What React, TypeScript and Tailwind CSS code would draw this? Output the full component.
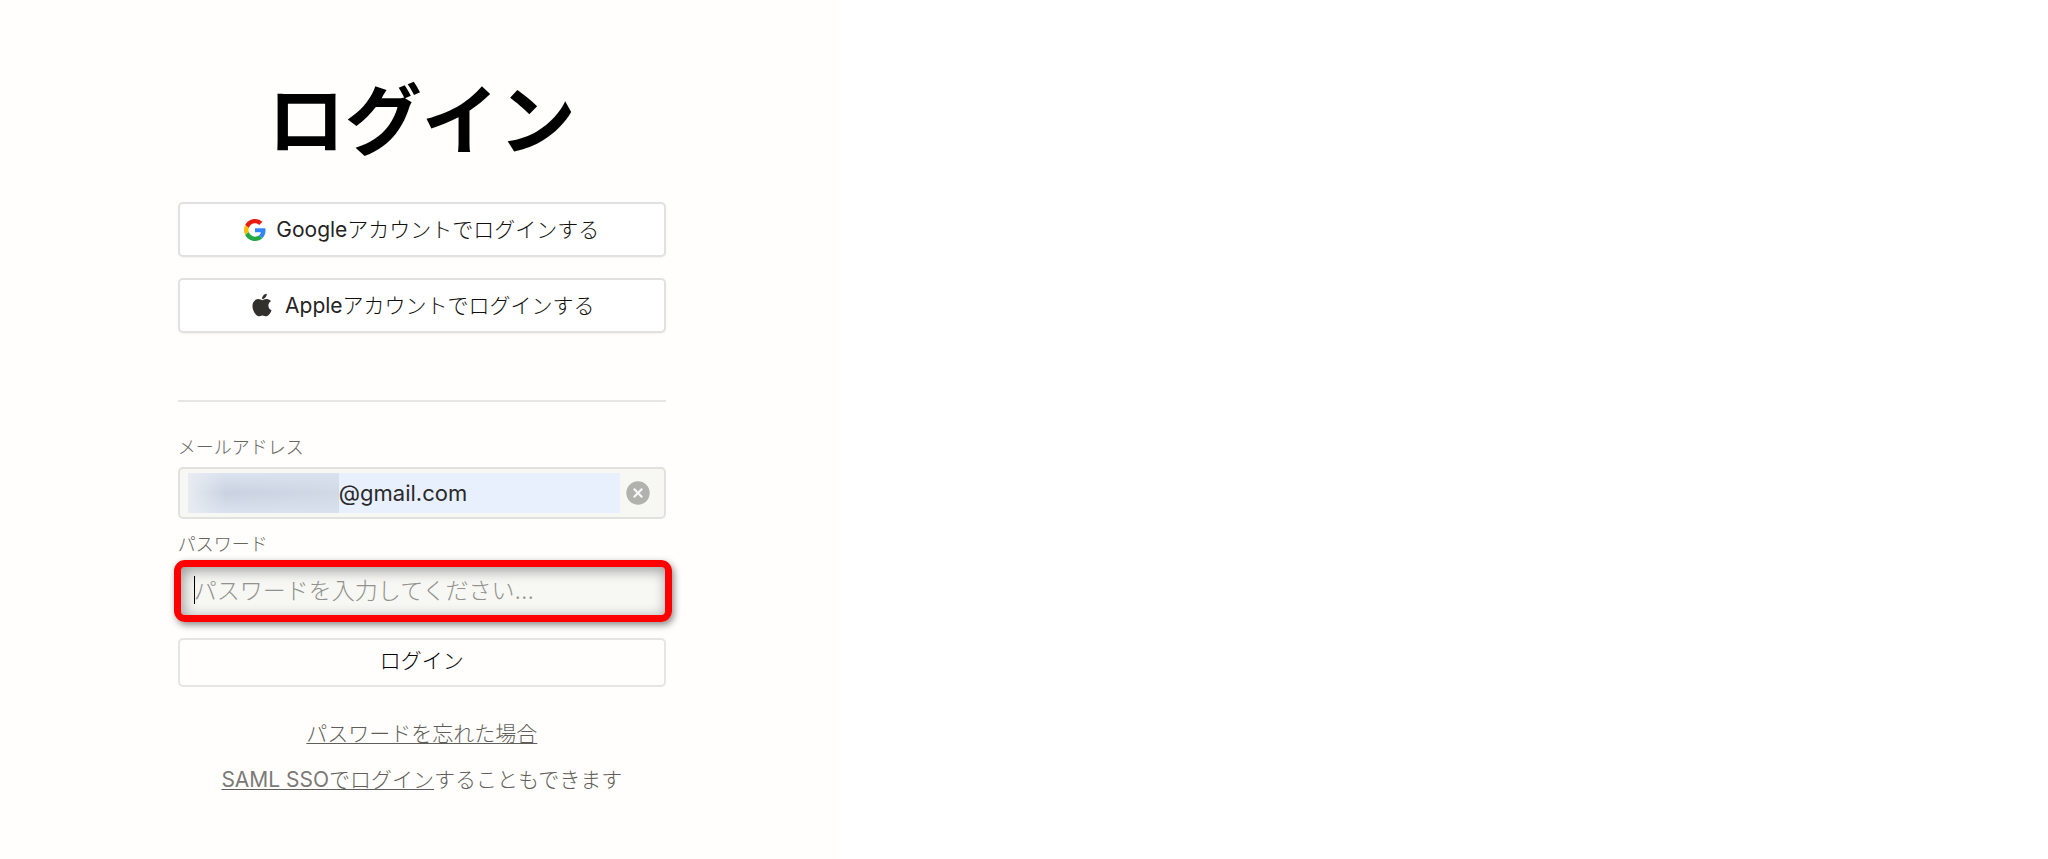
import { FaApple } from "react-icons/fa";
import type { ReactNode } from "react";

type ProviderButtonProps = {
  icon: ReactNode;
  provider: string;
};

function ProviderButton({ icon, provider }: ProviderButtonProps) {
  return (
    <button
      type="button"
      className="flex h-[55px] w-full items-center justify-center gap-[10px] rounded-[5px] border-2 border-[#e1e1e1] bg-white text-[21px] leading-8 font-light text-[#11100c] shadow-[0_1px_2px_rgba(0,0,0,0.05)]"
    >
      {icon}
      <span>
        <span className="font-normal text-[#25241f]">{provider}</span>アカウントでログインする
      </span>
    </button>
  );
}

function GoogleIcon() {
  return (
    <svg viewBox="0 0 48 48" className="size-[22px] shrink-0" aria-hidden="true">
      <path fill="#ea1b0d" d="M24 9.5c3.5 0 6.7 1.2 9.2 3.6l6.9-6.9C35.9 2.4 30.5 0 24 0 14.6 0 6.5 5.4 2.6 13.2l8 6.2C12.4 13.7 17.7 9.5 24 9.5z" />
      <path fill="#3186ff" d="M47 24.6c0-1.6-.2-3.1-.4-4.6H24v9h12.9c-.6 3-2.3 5.5-4.8 7.2l7.7 6C44.4 38 47 31.9 47 24.6z" />
      <path fill="#fbbc05" d="M10.5 28.6a14.5 14.5 0 0 1 0-9.2l-7.9-6.2a24 24 0 0 0 0 21.6z" />
      <path fill="#22a845" d="M24 48c6.5 0 11.9-2.1 15.9-5.8l-7.7-6c-2.2 1.5-4.9 2.3-8.2 2.3-6.3 0-11.6-4.2-13.5-9.9l-7.9 6.2C6.5 42.6 14.6 48 24 48z" />
    </svg>
  );
}

function ClearIcon() {
  return (
    <svg viewBox="0 0 24 24" className="size-6" aria-hidden="true">
      <circle cx="12" cy="12" r="11.7" fill="#b1b1ae" />
      <path d="M7.8 7.8l8.4 8.4M16.2 7.8l-8.4 8.4" stroke="#f7f7f5" strokeWidth="2.2" />
    </svg>
  );
}

export default function App() {
  return (
    <div
      lang="ja"
      className="flex min-h-screen bg-white font-['Inter','Noto_Sans_CJK_JP',sans-serif]"
    >
      <main className="w-[41%] bg-[#fffefc] pt-[73px] pl-1">
        <div className="mx-auto max-w-[488px]">
          <h1 className="text-center text-[77px] leading-[96px] font-bold text-black">
            ログイン
          </h1>

          <div className="mt-[33px] flex flex-col gap-[21px]">
            <ProviderButton icon={<GoogleIcon />} provider="Google" />
            <ProviderButton
              icon={<FaApple className="mb-[2px] size-[26px] text-[#32302c]" />}
              provider="Apple"
            />
          </div>

          <hr className="mt-[67px] border-t-2 border-[#e6e6e4]" />

          <form onSubmit={(e) => e.preventDefault()}>
            <label
              htmlFor="email"
              className="mt-8 block text-[18px] leading-7 font-light text-[#66655f]"
            >
              メールアドレス
            </label>
            <div className="mt-[5px] flex h-[52px] items-center rounded-[5px] border-2 border-[#e1e1de] bg-[#f7f7f4] pl-2">
              <div className="flex h-10 min-w-0 flex-1 bg-[#e8effd]">
                {/* masked part of the address */}
                <span className="w-[151px] shrink-0 bg-linear-to-b from-[#dbe3f0] via-[#cad2e1] to-[#dae2f0]">
                  <span className="block h-full bg-linear-to-r from-[#e8ecf1] via-transparent via-25% to-[#d8e0ee]/50" />
                </span>
                <input
                  id="email"
                  type="text"
                  defaultValue="@gmail.com"
                  className="min-w-0 flex-1 bg-transparent text-[22px] text-[#2a2a2a] outline-none"
                />
              </div>
              <button
                type="button"
                aria-label="クリア"
                className="flex w-11 shrink-0 pl-[6px]"
              >
                <ClearIcon />
              </button>
            </div>

            <label
              htmlFor="password"
              className="mt-3 block text-[18px] leading-7 font-light text-[#66655f]"
            >
              パスワード
            </label>
            <div className="relative mt-[7px] h-[50px] bg-[#f7f7f4]">
              <input
                id="password"
                type="password"
                placeholder="パスワードを入力してください..."
                className="h-full w-full bg-transparent pl-4 text-[23px] font-light text-[#37352f] outline-none placeholder:text-[#92928e]"
              />
              {/* caret and highlight frame */}
              <span className="absolute top-[10px] left-4 h-7 w-px bg-black" />
              <span className="pointer-events-none absolute -inset-y-[6px] -right-[6px] -left-1 rounded-[11px] border-[7px] border-[#ff0000] shadow-[2px_3px_7px_rgba(0,0,0,0.45),inset_2px_3px_14px_rgba(0,0,0,0.4)]" />
            </div>

            <button
              type="submit"
              className="mt-[22px] h-[49px] w-full rounded-[5px] border-2 border-[#e5e5e3] pb-[3px] text-[21px] leading-8 font-light text-black"
            >
              ログイン
            </button>
          </form>

          <div className="mt-[31px] flex flex-col items-center gap-[14px] text-[21px] leading-8 font-light text-[#5f5e5a]">
            <a href="#" className="underline decoration-1 underline-offset-2">
              パスワードを忘れた場合
            </a>
            <p>
              <a href="#" className="underline decoration-1 underline-offset-2">
                <span className="font-normal text-[#7b7a76]">SAML SSO</span>でログイン
              </a>
              することもできます
            </p>
          </div>
        </div>
      </main>
    </div>
  );
}
